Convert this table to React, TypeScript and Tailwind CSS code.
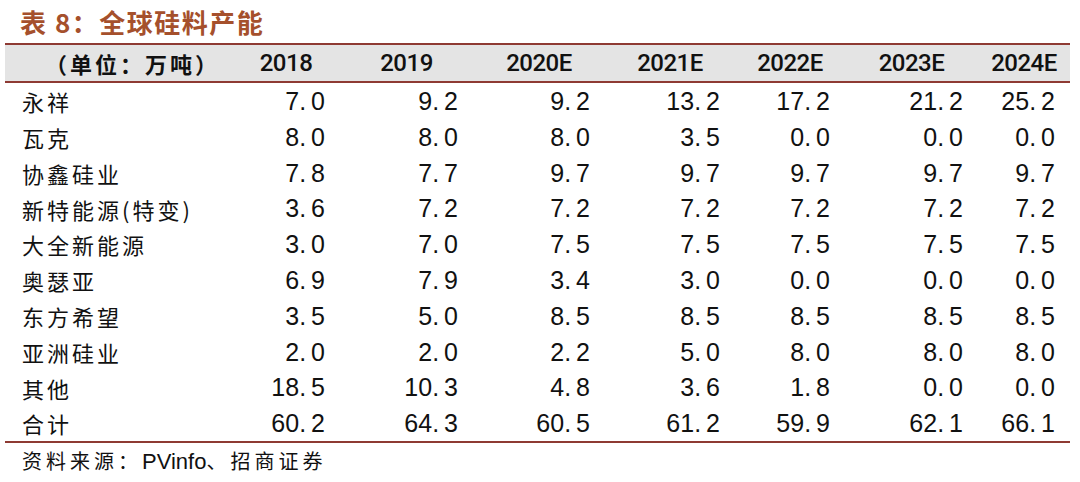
const years = ["2018", "2019", "2020E", "2021E", "2022E", "2023E", "2024E"];

const rows: [string, string[]][] = [
  ["永祥", ["7.0", "9.2", "9.2", "13.2", "17.2", "21.2", "25.2"]],
  ["瓦克", ["8.0", "8.0", "8.0", "3.5", "0.0", "0.0", "0.0"]],
  ["协鑫硅业", ["7.8", "7.7", "9.7", "9.7", "9.7", "9.7", "9.7"]],
  ["新特能源(特变)", ["3.6", "7.2", "7.2", "7.2", "7.2", "7.2", "7.2"]],
  ["大全新能源", ["3.0", "7.0", "7.5", "7.5", "7.5", "7.5", "7.5"]],
  ["奥瑟亚", ["6.9", "7.9", "3.4", "3.0", "0.0", "0.0", "0.0"]],
  ["东方希望", ["3.5", "5.0", "8.5", "8.5", "8.5", "8.5", "8.5"]],
  ["亚洲硅业", ["2.0", "2.0", "2.2", "5.0", "8.0", "8.0", "8.0"]],
  ["其他", ["18.5", "10.3", "4.8", "3.6", "1.8", "0.0", "0.0"]],
  ["合计", ["60.2", "64.3", "60.5", "61.2", "59.9", "62.1", "66.1"]],
];

const grid = "grid grid-cols-[227px_108px_133px_132px_130px_110px_133px_92px]";
const cjk = "font-['Noto_Sans_CJK_SC',sans-serif]";

export default function App() {
  return (
    <div className="w-[1080px] h-[482px] bg-white overflow-hidden">
      <div className={`h-[43px] pl-[20px] pt-[4px] text-[26px] font-bold leading-[36px] tracking-[1.5px] text-[#a5502c] ${cjk}`}>
        表 8：全球硅料产能
      </div>

      <div className="ml-[5px] w-[1065px]">
        {/* header */}
        <div className={`${grid} h-[40px] bg-[#e4e4e4] border-t-2 border-b-2 border-[#8e3a33] items-center`}>
          <div className={`pl-[40px] text-[22px] font-bold tracking-[3px] text-[#111] whitespace-nowrap ${cjk}`}>
            （单位：万吨）
          </div>
          {years.map((y) => (
            <div key={y} className="text-center text-[24px] font-medium text-[#111] font-['Roboto',sans-serif] tracking-[-0.5px]">
              {y}
            </div>
          ))}
        </div>

        {/* body */}
        <div className="border-b-2 border-[#8e3a33]">
          {rows.map(([name, vals]) => (
            <div key={name} className={`${grid} h-[35.8px] items-center text-[#111]`}>
              <div className={`pl-[17px] text-[22px] tracking-[3px] whitespace-nowrap ${cjk}`}>{name}</div>
              {vals.map((v, i) => (
                <div
                  key={i}
                  className="text-right pr-[15px] text-[25px] font-['Liberation_Sans',sans-serif] whitespace-nowrap"
                >
                  {v.replace(".", ".\u2009")}
                </div>
              ))}
            </div>
          ))}
        </div>
      </div>

      <div className={`pl-[22px] pt-[4px] text-[20px] leading-[28px] tracking-[4px] text-[#111] ${cjk}`}>
        资料来源：<span className="font-['Liberation_Sans',sans-serif] text-[22px] tracking-normal">PVinfo</span>、招商证券
      </div>
    </div>
  );
}
